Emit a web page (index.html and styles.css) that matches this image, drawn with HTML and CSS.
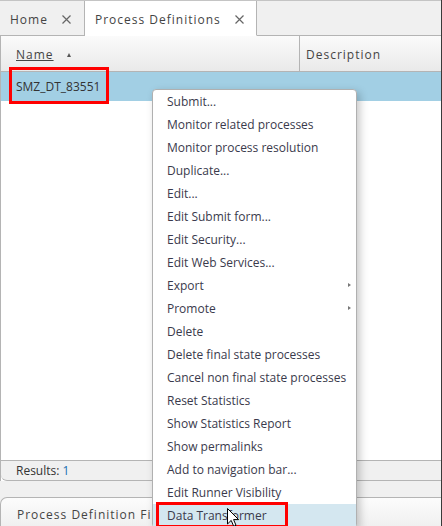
FILE: index.html
```html
<!DOCTYPE html>
<html lang="en">
<head>
    <meta charset="UTF-8">
    <title>Process Definitions</title>
    <link rel="stylesheet" href="styles.css">
</head>
<body>
    <div class="app">
        <div class="tabs">
            <div class="tab">Home
                <svg class="close" width="9" height="9" viewBox="0 0 9 9"><path d="M0.5 0.5 L8.5 8.5 M8.5 0.5 L0.5 8.5" stroke="#666" stroke-width="1.2"/></svg>
            </div>
            <div class="tab active">Process Definitions
                <svg class="close" width="9" height="9" viewBox="0 0 9 9"><path d="M0.5 0.5 L8.5 8.5 M8.5 0.5 L0.5 8.5" stroke="#666" stroke-width="1.2"/></svg>
            </div>
            <div class="tab-fill"></div>
        </div>

        <div class="grid">
            <div class="grid-head">
                <div class="col col-name"><span class="sort-label">Name</span><span class="sort-arrow"></span></div>
                <div class="col col-desc">Description</div>
            </div>
            <div class="grid-body">
                <div class="row selected">SMZ_DT_83551</div>
            </div>
            <div class="grid-foot">Results: <span class="count">1</span></div>
        </div>

        <div class="panel">
            <div class="panel-title">Process Definition Filters</div>
        </div>
    </div>

    <ul class="menu">
        <li>Submit...</li>
        <li>Monitor related processes</li>
        <li>Monitor process resolution</li>
        <li>Duplicate...</li>
        <li>Edit...</li>
        <li>Edit Submit form...</li>
        <li>Edit Security...</li>
        <li>Edit Web Services...</li>
        <li class="sub">Export</li>
        <li class="sub">Promote</li>
        <li>Delete</li>
        <li>Delete final state processes</li>
        <li>Cancel non final state processes</li>
        <li>Reset Statistics</li>
        <li>Show Statistics Report</li>
        <li>Show permalinks</li>
        <li>Add to navigation bar...</li>
        <li>Edit Runner Visibility</li>
        <li class="hover">Data Transformer</li>
    </ul>

    <div class="mark mark-row"></div>
    <div class="mark mark-item"></div>

    <svg class="cursor" width="13" height="20" viewBox="0 0 13 20">
        <path d="M0.5 0.5 L0.5 16 L4.2 12.4 L6.7 18.3 L9 17.3 L6.6 11.6 L11.6 11.6 Z" fill="#fff" stroke="#000" stroke-width="1"/>
    </svg>
</body>
</html>
```

FILE: styles.css
```css
body {
    margin: 0;
    font-family: "Open Sans", Arial, sans-serif;
    font-size: 12px;
    color: #333;
    background-color: #f0f0f0;
    overflow: hidden;
}

.app {
    width: 441px;
    height: 526px;
    border-right: 1px solid #3a3a3a;
    display: flex;
    flex-direction: column;
    background-color: #f0f0f0;
}

/* tabs */
.tabs {
    display: flex;
    height: 36px;
    border-top: 1px solid #c4c4c4;
    box-sizing: border-box;
}

.tab {
    display: flex;
    align-items: center;
    padding: 2px 13px 0 10px;
    letter-spacing: 1px;
    color: #444;
    border-right: 1px solid #b4b4b4;
    border-bottom: 1px solid #b4b4b4;
    background-color: #f0f0f0;
}

.tab.active {
    background-color: #fff;
    border-bottom-color: #fff;
    padding-right: 12px;
}

.close {
    margin-left: 14px;
}

.tab-fill {
    flex: 1;
    border-bottom: 1px solid #b4b4b4;
}

/* grid */
.grid {
    height: 445px;
    display: flex;
    flex-direction: column;
    background-color: #fff;
    border-left: 1px solid #b4b4b4;
}

.grid-head {
    display: flex;
    height: 35px;
    border-bottom: 1px solid #b4b4b4;
    background: linear-gradient(#fbfbfb, #e9e9e9);
}

.col {
    display: flex;
    align-items: center;
    letter-spacing: 1px;
    color: #444;
    padding-top: 2px;
}

.col-name {
    width: 283px;
    padding-left: 15px;
    border-right: 1px solid #b4b4b4;
}

.sort-label {
    text-decoration: underline;
}

.sort-arrow {
    width: 0;
    height: 0;
    margin-left: 13px;
    border-left: 2.5px solid transparent;
    border-right: 2.5px solid transparent;
    border-bottom: 4px solid #555;
}

.col-desc {
    padding-left: 6px;
}

.grid-body {
    flex: 1;
}

.row {
    height: 29px;
    line-height: 29px;
    padding-left: 15px;
}

.row.selected {
    background-color: #a2cfe4;
}

.grid-foot {
    height: 19px;
    line-height: 19px;
    padding-left: 15px;
    background-color: #f0f0f0;
    border-top: 1px solid #b4b4b4;
    border-bottom: 1px solid #b4b4b4;
    border-bottom-left-radius: 6px;
}

.count {
    color: #1a6fb0;
}

/* lower panel */
.panel {
    margin-top: 16px;
    flex: 1;
    border-top: 1px solid #b4b4b4;
    border-left: 1px solid #b4b4b4;
    border-top-left-radius: 7px;
    background: linear-gradient(#fcfcfc, #f0f0f0);
}

.panel-title {
    padding: 8px 0 0 16px;
    letter-spacing: 1px;
    color: #444;
}

/* context menu */
.menu {
    position: absolute;
    left: 152px;
    top: 89px;
    width: 203px;
    margin: 0;
    padding: 0;
    list-style: none;
    background-color: #fff;
    border: 1px solid #b0b0b0;
    border-radius: 4px;
    box-shadow: 3px 3px 8px rgba(0, 0, 0, 0.22);
}

.menu li {
    position: relative;
    height: 23px;
    line-height: 23px;
    padding-left: 14px;
    color: #3a3a4c;
}

.menu li.sub::after {
    content: "";
    position: absolute;
    right: 5px;
    top: 9px;
    border-top: 2.5px solid transparent;
    border-bottom: 2.5px solid transparent;
    border-left: 3px solid #777;
}

.menu li.hover {
    background-color: #d4e7f0;
}

/* annotation boxes */
.mark {
    position: absolute;
    border: 3px solid #f00;
    box-sizing: border-box;
}

.mark-row {
    left: 9px;
    top: 67px;
    width: 100px;
    height: 37px;
}

.mark-item {
    left: 156px;
    top: 502px;
    width: 132px;
    height: 26px;
}

.cursor {
    position: absolute;
    left: 227px;
    top: 508px;
}
```
